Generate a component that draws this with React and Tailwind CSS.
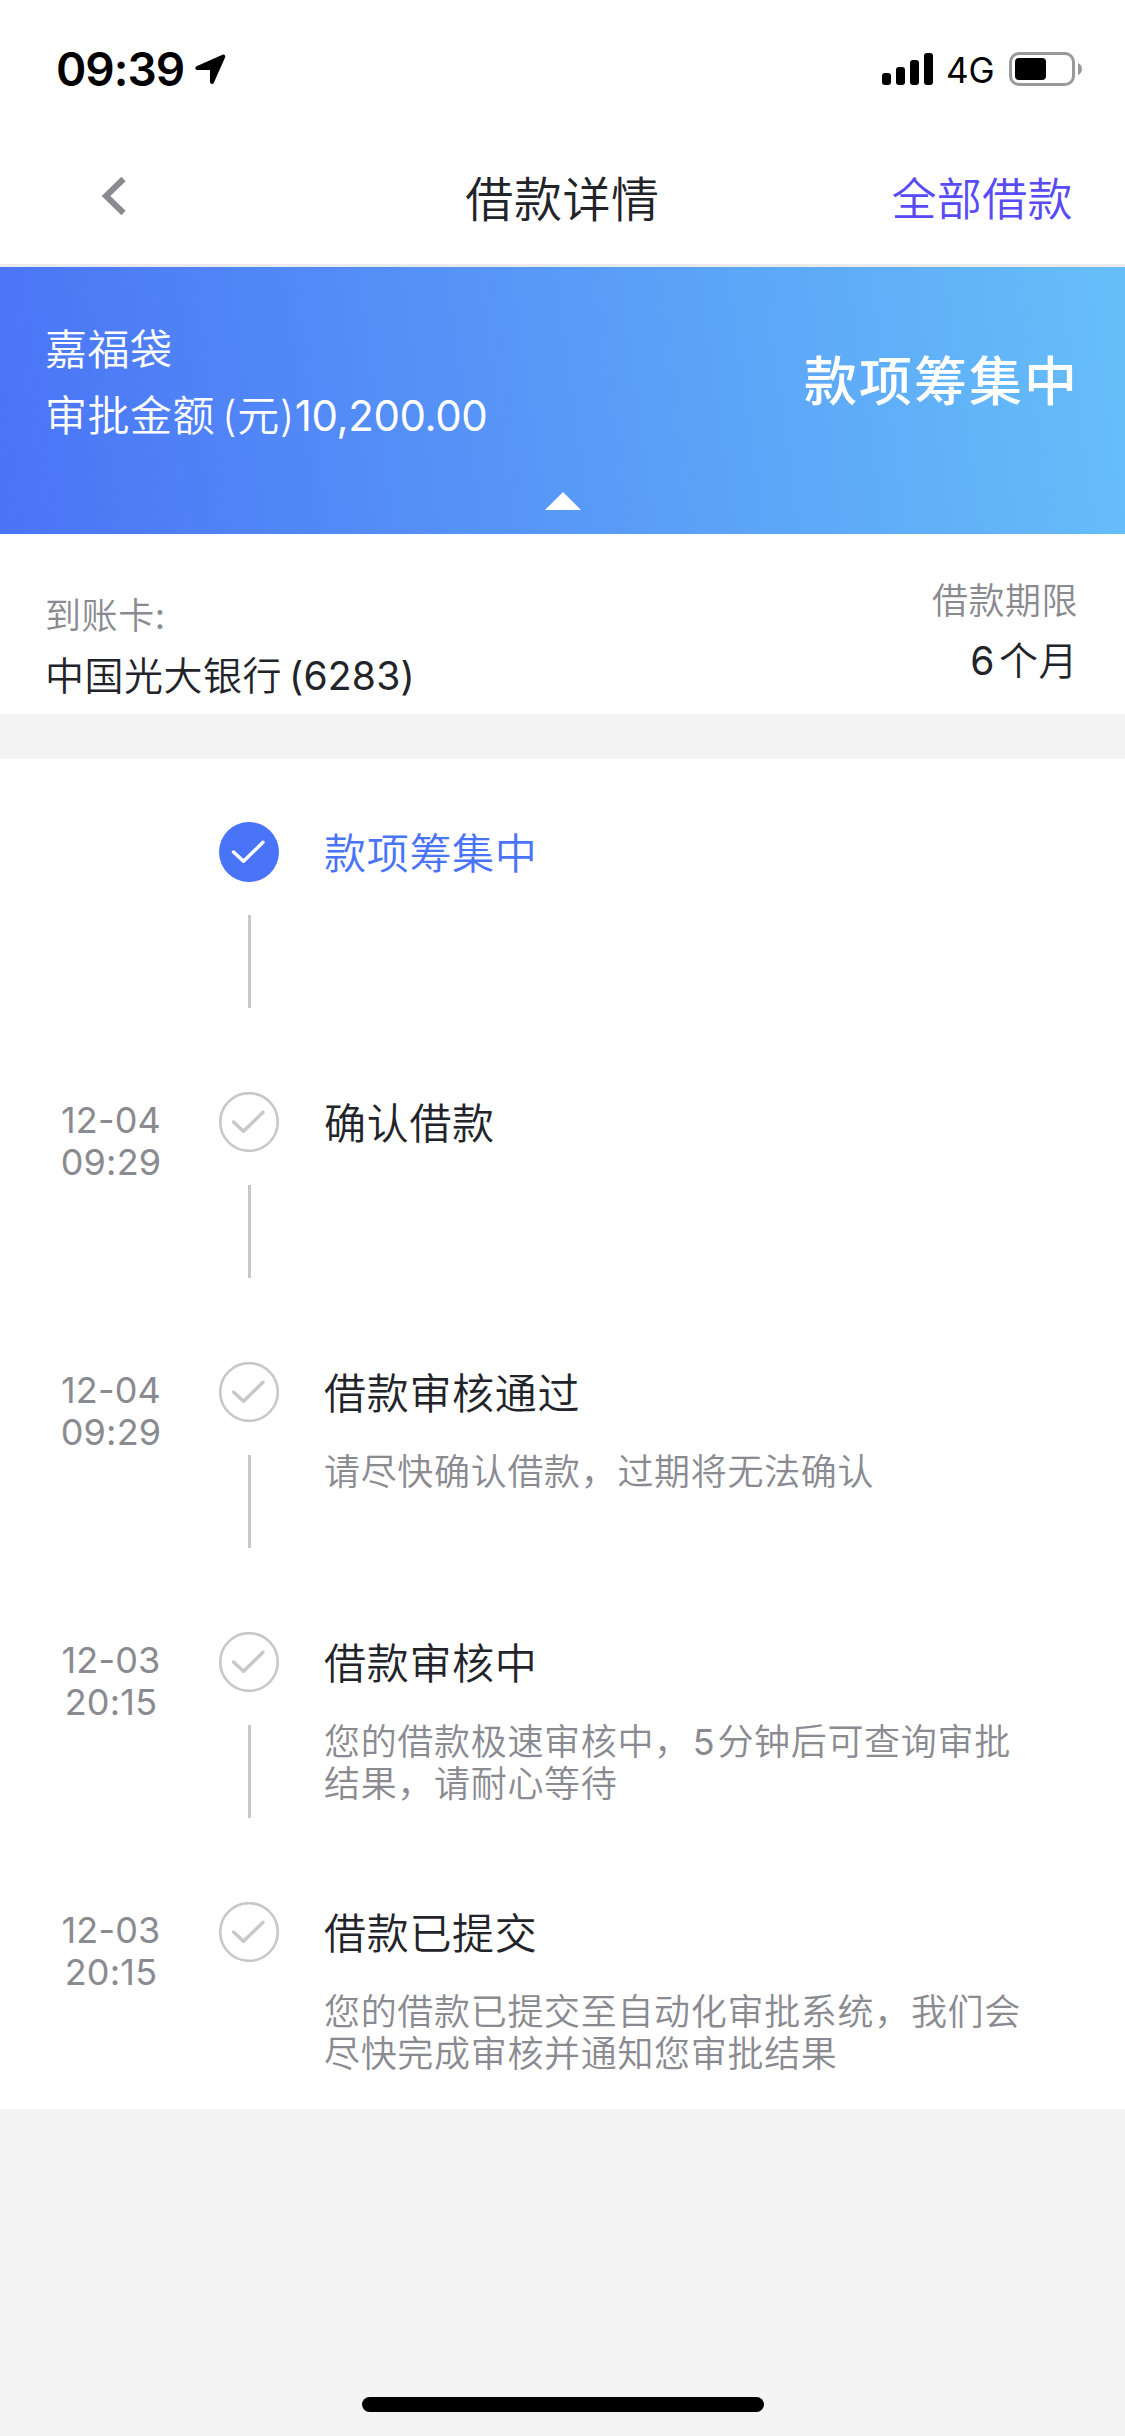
import clsx from 'clsx';

const steps = [
  { title: '款项筹集中', active: true },
  { date: '12-04', time: '09:29', title: '确认借款' },
  { date: '12-04', time: '09:29', title: '借款审核通过', desc: ['请尽快确认借款，过期将无法确认'] },
  {
    date: '12-03',
    time: '20:15',
    title: '借款审核中',
    desc: [
      <>
        您的借款极速审核中，<span className="mx-[2px] font-normal">5</span>分钟后可查询审批
      </>,
      '结果，请耐心等待',
    ],
  },
  {
    date: '12-03',
    time: '20:15',
    title: '借款已提交',
    desc: ['您的借款已提交至自动化审批系统，我们会', '尽快完成审核并通知您审批结果'],
  },
];

function StatusBar() {
  return (
    <div className="h-[132px] pt-[45px] pl-[56px] pr-[43px] flex justify-between items-start text-black">
      <div className="flex items-center h-12">
        <span className="w-[129px] text-[46px] leading-[48px] font-semibold tracking-[-1px]">09:39</span>
        <svg className="ml-[10px] w-[31px] h-[31px]" viewBox="0 0 31 31">
          <path
            d="M2.3 14 L28.3 2.5 L17 28 V14Z"
            fill="#000"
            stroke="#000"
            strokeWidth="4"
            strokeLinejoin="round"
          />
        </svg>
      </div>
      <div className="flex items-center h-12">
        <div className="flex items-end gap-[5px] h-8">
          <i className="w-[9px] h-3 rounded-[3px] bg-black" />
          <i className="w-[9px] h-[18px] rounded-[3px] bg-black" />
          <i className="w-[9px] h-[25px] rounded-[3px] bg-black" />
          <i className="w-[9px] h-8 rounded-[3px] bg-black" />
        </div>
        <span className="ml-[13px] w-[50px] pt-[2px] text-[35px] leading-[48px] font-normal">4G</span>
        <svg className="ml-[13px] w-[73px] h-[34px]" viewBox="0 0 73 34">
          <rect x="1.5" y="1.5" width="63" height="31" rx="8.5" fill="none" stroke="#999" strokeWidth="3" />
          <rect x="6" y="6" width="31" height="22" rx="4" fill="#000" />
          <path d="M69 11 Q73 13 73 17 T69 23Z" fill="#999" />
        </svg>
      </div>
    </div>
  );
}

function NavBar() {
  return (
    <header className="h-[135px] border-b-[3px] border-[#ebebeb] grid grid-cols-[1fr_auto_1fr] items-center pl-[101px] pr-[52px]">
      <svg className="mb-[4px] w-[26px] h-10" viewBox="0 0 26 40">
        <path d="M22.5 3 L5 20 L22.5 37" fill="none" stroke="#8a8a91" strokeWidth="6" />
      </svg>
      <h1 className="-ml-[49px] pt-[3px] text-[48px] leading-[60px] tracking-[0.6px] text-[#222429]">借款详情</h1>
      <a className="justify-self-end pt-[3px] text-[45px] leading-[60px] tracking-[0.4px] text-[#584bf4]">全部借款</a>
    </header>
  );
}

function Summary() {
  return (
    <section className="h-[267px] bg-[linear-gradient(82deg,#4a74f6,#66bff9)] text-white flex flex-col">
      <div className="flex-1 flex justify-between pl-[45px] pr-[46px]">
        <div className="pt-[50px] text-[42px] leading-[66px] tracking-[0.5px]">
          <div>嘉福袋</div>
          <div>
            审批金额<span className="ml-[7px]">(元)</span>
            <span className="font-normal tracking-[-0.4px]">10,200.00</span>
          </div>
        </div>
        <div className="pt-[82px] text-[53px] leading-[66px] font-medium tracking-[2px]">款项筹集中</div>
      </div>
      <svg className="mx-auto mb-6 w-9 h-[18px]" viewBox="0 0 36 18">
        <path d="M18 0 L36 18 H0Z" fill="#fff" />
      </svg>
    </section>
  );
}

function AccountInfo() {
  return (
    <section className="h-[180px] bg-white flex justify-between pl-[45px] pr-[47px]">
      <div className="pt-[52px]">
        <div className="text-[36px] leading-[60px] tracking-[0.6px] text-[#8a8a91]">
          到账卡<span className="font-normal">:</span>
        </div>
        <div className="text-[39px] leading-[60px] tracking-[0.5px] text-[#222429]">
          中国光大银行<span className="ml-[7px] font-normal tracking-[0.2px]">(6283)</span>
        </div>
      </div>
      <div className="pt-[37px] text-right">
        <div className="text-[36px] leading-[60px] tracking-[0.5px] text-[#8a8a91]">借款期限</div>
        <div className="text-[39px] leading-[60px] tracking-[0.5px] text-[#222429]">
          <span className="mr-[4px] font-normal">6</span>个月
        </div>
      </div>
    </section>
  );
}

function StepIcon({ active }) {
  return (
    <svg className="w-[60px] h-[60px]" viewBox="0 0 60 60" fill="none">
      {active ? (
        <circle cx="30" cy="30" r="30" fill="#4a74f8" />
      ) : (
        <circle cx="30" cy="30" r="28.8" stroke="#c8c8c8" strokeWidth="2.6" />
      )}
      <path
        d="M14.5 30 L24.5 39.3 L44 20.2"
        stroke={active ? '#fff' : '#c8c8c8'}
        strokeWidth="3.4"
        strokeLinecap="round"
        strokeLinejoin="round"
      />
    </svg>
  );
}

function Step({ step, last }) {
  return (
    <li className="h-[270px] pt-[63px] flex">
      <div className="w-[219px] pl-[3px] pt-[7px] text-center text-[36px] leading-[42px] font-normal tracking-[0.2px] text-[#8a8a91]">
        <div className="w-[216px]">{step.date}</div>
        <div className="w-[216px]">{step.time}</div>
      </div>
      <div className="w-[60px] flex flex-col items-center">
        <StepIcon active={step.active} />
        {!last && <div className="mt-[33px] w-[3px] h-[93px] bg-[#c8c8c8]" />}
      </div>
      <div className="ml-[45px] w-[720px]">
        <div
          className={clsx(
            'text-[42px] leading-[60px] tracking-[0.7px] mt-[2px]',
            step.active ? 'text-[#4a74f8]' : 'text-[#222429]',
          )}
        >
          {step.title}
        </div>
        {step.desc && (
          <div className="mt-[27px] text-[36px] leading-[42px] tracking-[0.68px] text-[#8a8a91]">
            {step.desc.map((line, i) => (
              <p key={i}>{line}</p>
            ))}
          </div>
        )}
      </div>
    </li>
  );
}

export default function App() {
  return (
    <div className="w-[1125px] h-[2436px] overflow-hidden flex flex-col bg-[#f4f4f4] font-[Inter,'Noto_Sans_CJK_SC',sans-serif] font-[350]">
      <div className="bg-white">
        <StatusBar />
        <NavBar />
      </div>
      <Summary />
      <AccountInfo />
      <ul className="mt-[45px] bg-white">
        {steps.map((step, i) => (
          <Step key={i} step={step} last={i === steps.length - 1} />
        ))}
      </ul>
      <div className="mt-auto mb-6 mx-auto w-[402px] h-[15px] rounded-full bg-black" />
    </div>
  );
}
